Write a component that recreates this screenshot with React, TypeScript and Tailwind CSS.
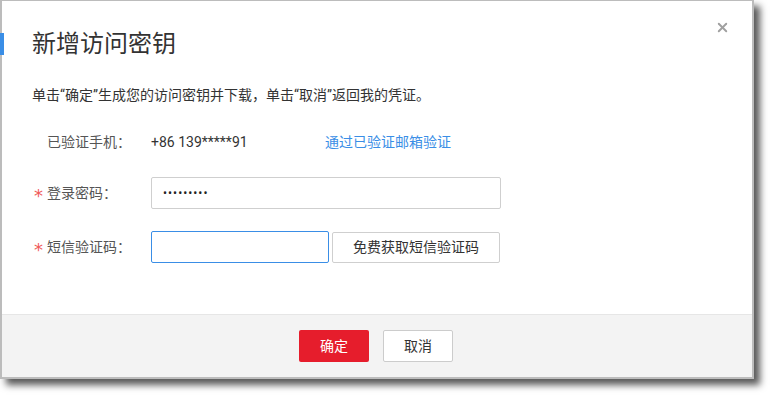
import { X } from "lucide-react";

const font = { fontFamily: 'Roboto, "Noto Sans CJK SC", sans-serif' };

function Label({ text, required }: { text: string; required?: boolean }) {
  return (
    <div className="w-[119px] shrink-0 flex items-center text-[14px] text-[#555]">
      <span className="w-[15px] pl-[2px] pt-[6px] leading-none text-[#f05a5a] text-[18px] font-['DejaVu_Sans',sans-serif]">
        {required ? "*" : ""}
      </span>
      <span>{text}</span>
    </div>
  );
}

export default function App() {
  return (
    <div className="w-[770px] h-[395px] bg-white" style={font}>
      {/* Dialog */}
      <div className="relative w-[754px] h-[379px] border-2 border-t border-[#bcbcbc] bg-white flex flex-col shadow-[6px_6px_7px_rgba(0,0,0,0.65)]">
        <button className="absolute right-[22px] top-[19px] text-[#a0a0a0]">
          <X className="w-[15px] h-[15px]" strokeWidth={3} />
        </button>

        {/* Header */}
        <div className="flex items-center h-[24px] mt-[31px] -ml-[2px]">
          <div className="w-[4px] h-[22px] bg-[#3a8ee6]" />
          <h1 className="ml-[28px] text-[24px] leading-none text-[#333] font-normal">新增访问密钥</h1>
        </div>

        {/* Body */}
        <div className="flex-1 pl-[30px] pt-[31px]">
          <p className="text-[14px] leading-[16px] text-[#333]">
            单击“确定”生成您的访问密钥并下载，单击“取消”返回我的凭证。
          </p>

          <div className="mt-[27px] flex items-center h-[24px]">
            <Label text="已验证手机：" />
            <span className="w-[174px] text-[14px] text-[#333]">+86 139*****91</span>
            <a className="text-[14px] text-[#3a8ee6]">通过已验证邮箱验证</a>
          </div>

          <div className="mt-[23px] flex items-center">
            <Label text="登录密码：" required />
            <input
              type="password"
              readOnly
              value="aaaaaaaaa"
              className="w-[350px] h-[32px] border border-[#cfcfcf] rounded-[2px] px-[11px] text-[12px] tracking-[1px] text-[#222] outline-none"
            />
          </div>

          <div className="mt-[22px] flex items-center">
            <Label text="短信验证码：" required />
            <input
              readOnly
              className="w-[178px] h-[32px] border border-[#3a8ee6] rounded-[2px] px-[10px] outline-none"
            />
            <button className="ml-[3px] w-[168px] h-[31px] border border-[#cfcfcf] rounded-[2px] bg-white text-[14px] text-[#333]">
              免费获取短信验证码
            </button>
          </div>
        </div>

        {/* Footer */}
        <div className="h-[63px] border-t border-[#e6e6e6] bg-[#f3f3f3] flex items-center justify-center gap-[14px] pr-[2px]">
          <button className="w-[70px] h-[32px] rounded-[2px] bg-[#e61d2c] text-white text-[14px]">确定</button>
          <button className="w-[70px] h-[32px] rounded-[2px] bg-white border border-[#cccccc] text-[#333] text-[14px]">取消</button>
        </div>
      </div>
    </div>
  );
}
